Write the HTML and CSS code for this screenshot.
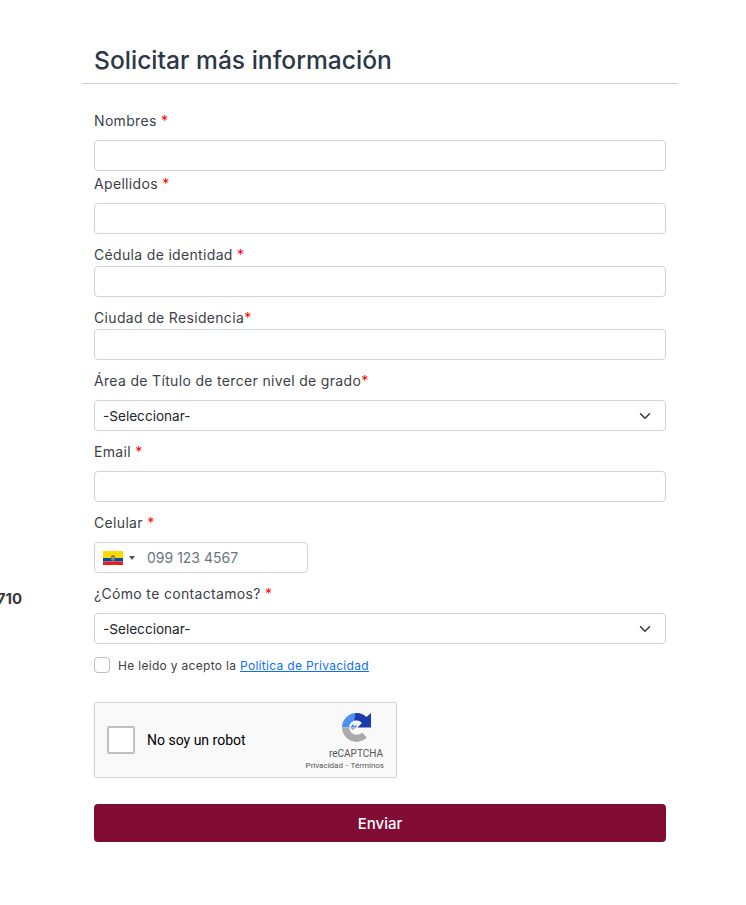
FILE: index.html
```html
<!DOCTYPE html>
<html lang="es">
<head>
<meta charset="utf-8">
<title>Solicitar más información</title>
<link rel="stylesheet" href="styles.css">
</head>
<body>
<div class="page">
  <aside class="side"><b>710</b></aside>
  <main class="panel">
    <h1 class="title">Solicitar más información</h1>
    <form class="form">
      <div class="field first"><label>Nombres <span class="req">*</span></label><input class="control" type="text"></div>
      <div class="field tight-top"><label>Apellidos <span class="req">*</span></label><input class="control" type="text"></div>
      <div class="field tight-bottom"><label>Cédula de identidad <span class="req">*</span></label><input class="control" type="text"></div>
      <div class="field tight-bottom"><label>Ciudad de Residencia<span class="req">*</span></label><input class="control" type="text"></div>
      <div class="field"><label>Área de Título de tercer nivel de grado<span class="req">*</span></label>
        <div class="control select"><span>-Seleccionar-</span><svg class="chev" viewBox="0 0 16 16"><path d="M2 5l6 6 6-6" fill="none" stroke="#343a40" stroke-width="2" stroke-linecap="round" stroke-linejoin="round"/></svg></div></div>
      <div class="field"><label>Email <span class="req">*</span></label><input class="control" type="text"></div>
      <div class="field"><label>Celular <span class="req">*</span></label>
        <div class="control tel">
          <svg class="flag" viewBox="0 0 20 14"><rect width="20" height="7" fill="#ffda00"/><rect y="7" width="20" height="3.5" fill="#034ea2"/><rect y="10.5" width="20" height="3.5" fill="#ed1c24"/><ellipse cx="10" cy="7" rx="2.2" ry="3" fill="#8a7a3a"/><ellipse cx="10" cy="7" rx="1.1" ry="1.7" fill="#6fa3c8"/></svg>
          <span class="caret"></span>
          <span class="placeholder">099 123 4567</span>
        </div></div>
      <div class="field"><label>¿Cómo te contactamos? <span class="req">*</span></label>
        <div class="control select"><span>-Seleccionar-</span><svg class="chev" viewBox="0 0 16 16"><path d="M2 5l6 6 6-6" fill="none" stroke="#343a40" stroke-width="2" stroke-linecap="round" stroke-linejoin="round"/></svg></div></div>
      <div class="consent"><span class="check"></span><span class="consent-text">He leido y acepto la <a href="#">Política de Privacidad</a></span></div>
      <div class="captcha">
        <span class="captcha-box"></span>
        <span class="captcha-label">No soy un robot</span>
        <div class="captcha-brand">
          <svg class="captcha-logo" viewBox="0 0 32 32">
            <path d="M0 16A16 16 0 0 1 16 0L20 .5 18 8.300 16 8A8 8 0 0 0 8 16z" fill="#4a90f0"/>
            <path d="M15 0H16A16 16 0 0 1 27 4.500L32 0V16H17L22 11A8 8 0 0 0 16 8L13.500 8.400z" fill="#1c3aa9"/>
            <path d="M0 16H8A8 8 0 0 0 16 24C18.500 24 20.500 23 22 21.500L27.500 27A16 16 0 0 1 0 16z" fill="#ababab"/>
            <path d="M9 16L12 12.500 14 14.500 16 12.500V16z" fill="#4a90f0"/>
            <path d="M9 16H15L12 19z" fill="#ababab"/>
          </svg>
          <span class="brand-name">reCAPTCHA</span>
          <span class="brand-links">Privacidad - Términos</span>
        </div>
      </div>
      <button class="submit" type="button">Enviar</button>
    </form>
  </main>
</div>
</body>
</html>
```
FILE: styles.css
```css
* { box-sizing: border-box; }
html, body { margin: 0; padding: 0; background: #fff; }
body { font-family: Inter, "Liberation Sans", sans-serif; color: #343a40; font-size: 14px; }
.page { display: flex; height: 905px; overflow: hidden; }
.side { width: 22px; margin-right: 60px; padding-top: 589px; display: flex; justify-content: flex-end; font-size: 15px; line-height: 20px; color: #3a3a3a; white-space: nowrap; flex: none; }
.panel { width: 596px; flex: none; }
.title { margin: 0; padding: 44px 12px 7px; height: 84px; font-size: 24.6px; line-height: 32px; font-weight: 500; color: #2d3748; border-bottom: 1px solid #ccd0d5; }
.form { padding: 0 12px; display: flex; flex-direction: column; }
.field { margin-top: 10px; }
.field label { display: block; line-height: 22px; margin-bottom: 8px; font-size: 14px; letter-spacing: .33px; color: #3d4147; }
.field.first { margin-top: 26px; }
.field.tight-top { margin-top: 2px; }
.field.tight-bottom label { margin-bottom: 0; }
.req { color: #f00; }
.control { display: block; width: 100%; height: 31px; border: 1px solid #ced4da; border-radius: 4px; background: #fff; font: inherit; padding: 0 8px; }
.select { display: flex; align-items: center; justify-content: space-between; color: #212529; padding-right: 14px; font-size: 13.6px; }
.chev { width: 12px; height: 12px; }
.tel { width: 214px; display: flex; align-items: center; }
.flag { width: 20px; height: 14px; flex: none; }
.caret { width: 0; height: 0; margin-left: 6px; border-left: 3px solid transparent; border-right: 3px solid transparent; border-top: 4px solid #555; }
.placeholder { margin-left: 12px; color: #6c757d; }
.consent { display: flex; align-items: center; margin-top: 12px; height: 17px; }
.check { width: 16px; height: 16px; border: 1px solid #b9bfc6; border-radius: 4px; background: #fff; flex: none; }
.consent-text { margin-left: 8px; font-size: 12px; line-height: 19px; padding-top: 2px; letter-spacing: .31px; color: #3d4147; }
.consent-text a { color: #0d6efd; }
.captcha { margin-top: 29px; width: 303px; height: 76px; border: 1px solid #d3d3d3; border-radius: 3px; background: #f9f9f9; box-shadow: 0 0 3px rgba(0,0,0,.08); display: flex; align-items: center; padding-left: 12px; font-family: Roboto, "Liberation Sans", sans-serif; }
.captcha-box { width: 28px; height: 28px; border: 2px solid #c1c1c1; border-radius: 2px; background: #fff; flex: none; }
.captcha-label { margin-left: 12px; font-size: 14px; color: #000; }
.captcha-brand { align-self: flex-start; padding-top: 10px; margin-left: auto; margin-right: 12px; display: flex; flex-direction: column; align-items: flex-end; color: #555; }
.captcha-logo { width: 29px; height: 29px; margin-right: 13px; }
.brand-name { font-size: 10px; line-height: 12px; margin-top: 6px; margin-right: 1px; }
.brand-links { font-size: 8px; line-height: 10px; margin-top: 1px; word-spacing: .8px; }
.submit { margin-top: 26px; width: 100%; height: 38px; border: 0; border-radius: 4px; background: #800b33; color: #fff; font-family: Inter, sans-serif; font-size: 15px; font-weight: 500; }
```
